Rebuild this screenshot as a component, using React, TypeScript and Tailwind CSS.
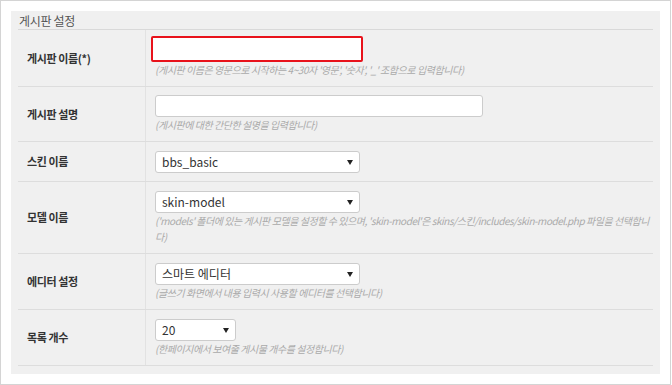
import type { ReactNode } from "react";

interface Row {
  label: string;
  control: ReactNode;
  help?: ReactNode;
  pad: string;
}

function Arrow() {
  return (
    <svg width="6" height="5" viewBox="0 0 6 5" className="shrink-0">
      <polygon points="0,0 6,0 3,5" fill="#222" />
    </svg>
  );
}

function FakeSelect({ value, width }: { value: string; width: string }) {
  return (
    <div
      className={`flex h-[22px] ${width} items-center justify-between rounded-[3px] border border-[#cccccc] bg-white pl-[6px] pr-[6px] text-[12px] leading-[20px] text-[#333]`}
    >
      <span>{value}</span>
      <Arrow />
    </div>
  );
}

const rows: Row[] = [
  {
    label: "게시판 이름(*)",
    pad: "pt-[6px] pb-[8px]",
    control: (
      <input
        type="text"
        className="-ml-[4px] block h-[26px] w-[212px] rounded-[2px] border-2 border-[#e8121b] bg-white outline-none"
      />
    ),
    help: "(게시판 이름은 영문으로 시작하는 4~30자 '영문', '숫자', '_' 조합으로 입력합니다)",
  },
  {
    label: "게시판 설명",
    pad: "pt-[8px] pb-[8px]",
    control: (
      <input
        type="text"
        className="block h-[22px] w-[328px] rounded-[3px] border border-[#cccccc] bg-white outline-none"
      />
    ),
    help: "(게시판에 대한 간단한 설명을 입력합니다)",
  },
  {
    label: "스킨 이름",
    pad: "pt-[9px] pb-[8px]",
    control: <FakeSelect value="bbs_basic" width="w-[205px]" />,
  },
  {
    label: "모델 이름",
    pad: "pt-[9px] pb-[8px]",
    control: <FakeSelect value="skin-model" width="w-[205px]" />,
    help: (
      <>
        ('models' 폴더에 있는 게시판 모델을 설정할 수 있으며, 'skin-model'은 skins/스킨/includes/skin-model.php 파일을 선택합니
        <br />
        다)
      </>
    ),
  },
  {
    label: "에디터 설정",
    pad: "pt-[9px] pb-[8px]",
    control: <FakeSelect value="스마트 에디터" width="w-[205px]" />,
    help: "(글쓰기 화면에서 내용 입력시 사용할 에디터를 선택합니다)",
  },
  {
    label: "목록 개수",
    pad: "pt-[9px] pb-[8px]",
    control: <FakeSelect value="20" width="w-[81px]" />,
    help: "(한페이지에서 보여줄 게시물 개수를 설정합니다)",
  },
];

export default function App() {
  return (
    <div className="h-[385px] w-[672px] bg-white font-['Noto_Sans_CJK_KR',sans-serif]">
      <div className="h-[385px] w-[671px] border border-[#d4d4d4] p-[10px]">
        <div className="bg-[#f0f0f0] px-[7px] pb-[8px]">
          <div className="h-[19px] border-b border-[#d9d9d9] pl-[1px] text-[12px] leading-[19px] tracking-[-0.3px] text-[#555]">
            게시판 설정
          </div>

          {rows.map((r) => (
            <div
              key={r.label}
              className="grid grid-cols-[128px_1fr] border-b border-[#dddddd]"
            >
              <div className="flex items-center border-r border-[#e2e2e2] pl-[9px] text-[11px] font-bold tracking-[-0.4px] text-[#333]">
                {r.label}
              </div>
              <div className={`pl-[9px] ${r.pad}`}>
                {r.control}
                {r.help && (
                  <div className="whitespace-nowrap text-[10px] italic leading-[16px] tracking-[-0.45px] text-[#aaaaaa]">
                    {r.help}
                  </div>
                )}
              </div>
            </div>
          ))}
        </div>
      </div>
    </div>
  );
}
